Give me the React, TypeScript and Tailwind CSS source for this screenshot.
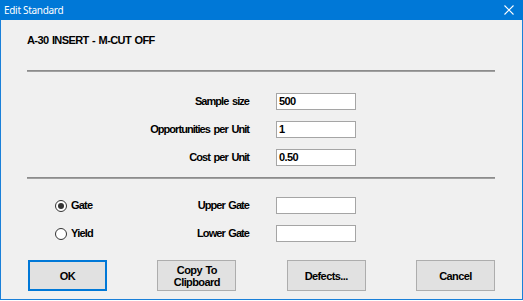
import React from "react";

const font = { fontFamily: '"Liberation Sans", Arial, sans-serif' };

function TextBox({ value }: { value?: string }) {
  return (
    <div className="w-[80px] h-[17px] bg-white border border-[#a5a5a5] pl-[2px] flex items-center text-[11px] font-bold text-black leading-none tracking-[-0.6px]">
      {value}
    </div>
  );
}

function Radio({ checked, label }: { checked?: boolean; label: string }) {
  return (
    <div className="flex items-center gap-[4px] ml-[28px]">
      <div className="w-[12px] h-[12px] rounded-full border border-[#333333] bg-white flex items-center justify-center">
        {checked && <div className="w-[6px] h-[6px] rounded-full bg-[#333333]" />}
      </div>
      <span className="text-[11px] font-bold text-black tracking-[-0.8px]">{label}</span>
    </div>
  );
}

function Btn({ children, def }: { children: React.ReactNode; def?: boolean }) {
  return (
    <div
      className={
        "w-[79px] h-[31px] bg-[#e1e1e1] flex items-center justify-center text-center text-[11px] leading-[12px] font-bold text-black tracking-[-0.6px] [word-spacing:1px] " +
        (def ? "border-2 border-[#0078d7]" : "border border-[#adadad]")
      }
    >
      {children}
    </div>
  );
}

function Row({ left, label, value }: { left?: React.ReactNode; label: string; value?: string }) {
  return (
    <div className="flex items-center h-[17px]">
      <div className="w-[222px] flex items-center justify-between">
        <div>{left}</div>
        <span className="text-[11px] font-bold text-black tracking-[-0.95px] [word-spacing:1.5px]">{label}</span>
      </div>
      <div className="ml-[27px]">
        <TextBox value={value} />
      </div>
    </div>
  );
}

export default function App() {
  return (
    <div className="w-[523px] h-[300px] flex flex-col bg-[#1a80d9]" style={font}>
      <div className="h-[20px] bg-[#0078d7] flex items-center justify-between pl-[4px] pr-[9px]">
        <span
          className="text-white text-[10px] tracking-[-0.3px]"
          style={{ fontFamily: '"Noto Sans", "Open Sans", sans-serif' }}
        >
          Edit Standard
        </span>
        <svg width="10" height="10" viewBox="0 0 10 10">
          <path d="M0.5 0.5 L9.5 9.5 M9.5 0.5 L0.5 9.5" stroke="white" strokeWidth="1.1" />
        </svg>
      </div>
      <div className="flex-1 mx-px mb-px bg-[#f0f0f0] pl-[26px] pr-[27px] flex flex-col">
        <div className="mt-[14px] h-[13px] text-[11px] font-bold text-black leading-[13px] tracking-[-0.6px] [word-spacing:1px]">
          A-30 INSERT - M-CUT OFF
        </div>
        <div className="mt-[23px] h-[2px] border-t border-[#8c8c8c] border-b border-b-[#a0a0a0]" />
        <div className="mt-[21px] flex flex-col gap-[11px]">
          <Row label="Sample size" value="500" />
          <Row label="Opportunities per Unit" value="1" />
          <Row label="Cost per Unit" value="0.50" />
        </div>
        <div className="mt-[11px] h-[2px] border-t border-[#8c8c8c] border-b border-b-[#a0a0a0]" />
        <div className="mt-[18px] flex flex-col gap-[11px]">
          <Row left={<Radio checked label="Gate" />} label="Upper Gate" />
          <Row left={<Radio label="Yield" />} label="Lower Gate" />
        </div>
        <div className="mt-[18px] ml-px flex justify-between">
          <Btn def>OK</Btn>
          <Btn>
            Copy To
            <br />
            Clipboard
          </Btn>
          <Btn>Defects...</Btn>
          <Btn>Cancel</Btn>
        </div>
      </div>
    </div>
  );
}
